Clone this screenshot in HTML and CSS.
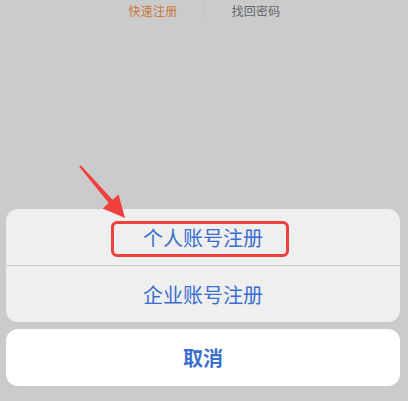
FILE: index.html
```html
<!DOCTYPE html>
<html lang="zh-CN">
<head>
    <meta charset="UTF-8">
    <meta name="viewport" content="width=device-width, initial-scale=1.0">
    <title>注册</title>
    <link rel="stylesheet" href="styles.css">
</head>
<body>

<div class="backdrop">
    <div class="login-card">
        <div class="links">
            <a class="link active" href="#">快速注册</a>
            <span class="divider"></span>
            <a class="link" href="#">找回密码</a>
        </div>
    </div>
</div>

<div class="sheet">
    <div class="group">
        <div class="option highlighted">
            <span>个人账号注册</span>
            <div class="mark"></div>
        </div>
        <div class="option">
            <span>企业账号注册</span>
        </div>
    </div>
    <div class="cancel">取消</div>

    <!-- annotation arrow -->
    <svg class="arrow" width="140" height="70" viewBox="0 149 140 70">
        <polygon points="80.8,165.3 112.5,199.8 118.6,194.4 125,218 102.6,208.4 108.7,203 79.2,166.7" fill="#f0403c"/>
    </svg>
</div>

</body>
</html>
```

FILE: styles.css
```css
body {
    margin: 0;
    height: 100vh;
    display: flex;
    flex-direction: column;
    background-color: #cbcbcb;
    font-family: "Noto Sans CJK SC", "Noto Sans", sans-serif;
    overflow: hidden;
}
.backdrop {
    padding: 0 18px 0 19px;
}
.login-card {
    height: 103px;
    margin-top: -10px;
    border-left: 2px solid #cdcdcd;
    border-right: 2px solid #cecece;
    border-bottom: 1px solid #cdcdcd;
    border-radius: 0 0 6px 6px;
}
.links {
    display: flex;
    justify-content: center;
    align-items: center;
    padding-top: 9px;
    height: 22px;
}
.link {
    font-size: 12px;
    color: #666;
    text-decoration: none;
    letter-spacing: 0.3px;
    width: 56px;
    text-align: center;
}
.link.active {
    color: #c9783a;
}
.divider {
    width: 1px;
    height: 22px;
    margin: 0 24px 0 22px;
    background-color: #c6c6c6;
}
.sheet {
    margin-top: auto;
    padding: 0 8px 15px 6px;
    position: relative;
}
.group {
    background-color: #efefef;
    border-radius: 12px;
    overflow: hidden;
}
.option {
    height: 56px;
    display: flex;
    align-items: center;
    justify-content: center;
    color: #3a6fcf;
    font-size: 20px;
    position: relative;
}
.option + .option {
    border-top: 1px solid #c9c9c9;
}
.mark {
    position: absolute;
    left: 105px;
    top: 12px;
    width: 172px;
    height: 30px;
    border: 3px solid #f0403c;
    border-radius: 6px;
}
.cancel {
    margin-top: 7px;
    height: 57px;
    background-color: #fff;
    border-radius: 12px;
    display: flex;
    align-items: center;
    justify-content: center;
    color: #3a6fcf;
    font-size: 20px;
    font-weight: bold;
}
.arrow {
    position: absolute;
    left: 0;
    top: -60px;
}
```
